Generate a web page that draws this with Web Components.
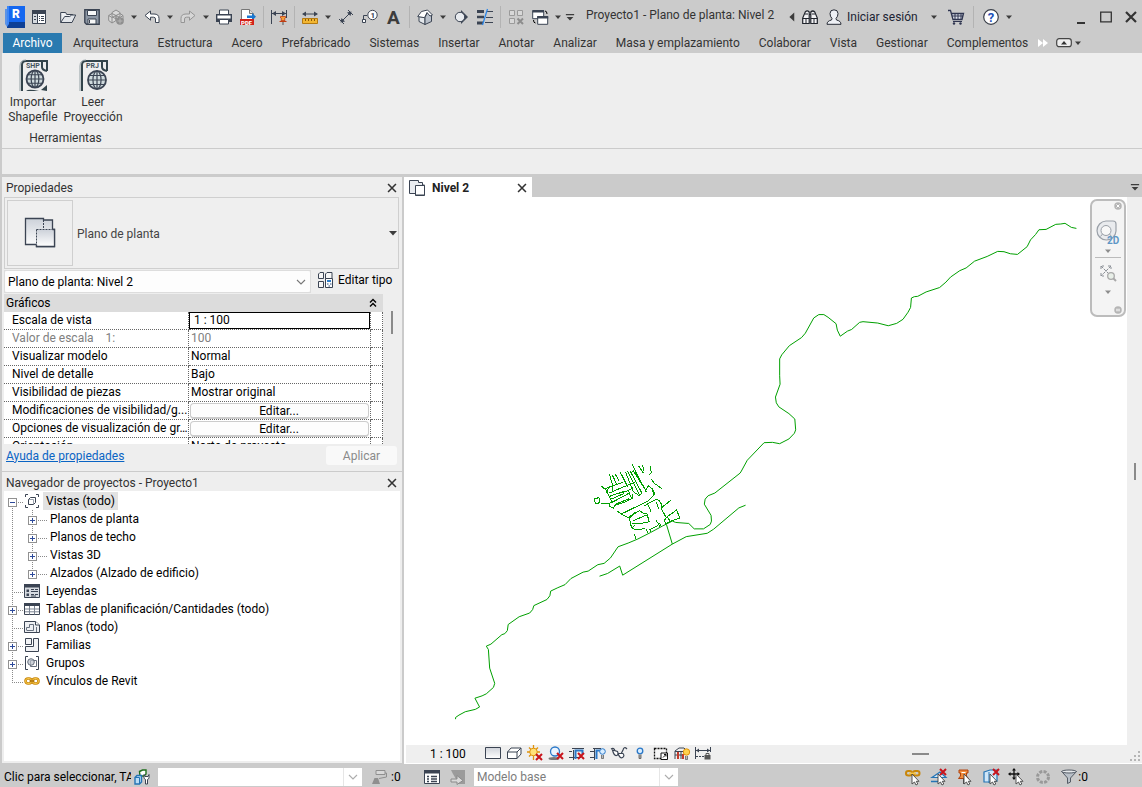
<!DOCTYPE html>
<html lang="es">
<head>
<meta charset="utf-8">
<title>Proyecto1 - Plano de planta: Nivel 2</title>
<style>
  html, body { margin: 0; height: 100%; }
  body {
    --chrome: #cbcbcb;
    --panel: #eeeeee;
    --line: #c8c8c8;
    --ink: #3b4453;
    font: 12px/18px Roboto, "Open Sans", sans-serif;
    color: #000;
    background: var(--chrome);
    overflow: hidden;
  }
</style>
</head>
<body>
<rv-app></rv-app>

<script>
/* ---------- icon set, drawn on a 16 unit grid unless a viewBox is given ---------- */
const K = '#3b4453';
const cursor = '<path d="M7 5v10l2.5-2 1.5 3 1.8-1-1.5-2.7H14z" fill="#fff" stroke="#444" stroke-width=".9"/>';
const redX = (x, y) => `<path d="M${x} ${y}l6 6m0-6l-6 6" stroke="#c8141c" stroke-width="2"/>`;
const globe = (x, y, r) => `<g fill="none" stroke="${K}" stroke-width="1.2"><circle cx="${x}" cy="${y}" r="${r}" fill="#cfdadd" stroke-width="1.8"/><ellipse cx="${x}" cy="${y}" rx="${r * .45}" ry="${r}"/><path d="M${x - r} ${y}h${2 * r}M${x} ${y - r}v${2 * r}M${x - r + 1} ${y - r / 2}h${2 * r - 2}M${x - r + 1} ${y + r / 2}h${2 * r - 2}"/></g>`;
const sheet = (label, foot) => `<path d="M3 32V6q0-4 4-4h14l7 0v10" fill="none" stroke="#33444b" stroke-width="2"/><path d="M23 2v6q0 3 5 4" fill="none" stroke="#33444b" stroke-width="2"/><path d="M1 32V7q0-6 6-6" fill="none" stroke="#93a0a5" stroke-width="1"/><text x="7" y="9" font-size="7" font-weight="700" fill="#44545c" font-family="Roboto,sans-serif">${label}</text>${foot}`;
const ICONS = {
  logo: ['0 0 20 22', `<path d="M0 3h4v18H2l-2-3z" fill="#5c93e6"/><path d="M2 1h18v21H2z" fill="#0d3f96"/><path d="M2 0h18v16H4z" fill="#1467f0"/><path d="M2 0v21l2-3V0z" fill="#3d86f6"/><text x="7" y="12" font-size="12" font-weight="900" fill="#fff" font-family="Roboto,sans-serif">R</text>`],
  props: ['', `<path d="M1.5 1.5h13v13h-13z" fill="#fff" stroke="${K}"/><path d="M1 1h14v4H1z" fill="${K}"/><path d="M2 5h4v9H2z" fill="#d6dae0"/><path d="M6.500 5v9M3 7.500h2M3 10.500h2M8 7.500h1M10 7.500h3M8 9.500h1M10 9.500h3M8 11.500h1M10 11.500h3" stroke="${K}"/>`],
  open: ['', `<path d="M.7 13.500V3.500h5l1 2h6v3" fill="#eef0f3" stroke="${K}"/><path d="M.7 13.500l4-6h5l2-1.500h4L12 13.500z" fill="#e3e6ea" stroke="${K}"/>`],
  save: ['', `<path d="M.8.800h14.400v14.400H2.500L.8 13.500z" fill="#8d97a5" stroke="${K}" stroke-width="1.400"/><path d="M3.500 1.500h9v5h-9z" fill="#f6f7f8" stroke="${K}"/><path d="M4 10h8v5H4z" fill="#f6f7f8" stroke="${K}"/><path d="M5.500 11v3" stroke="${K}"/>`],
  sync: ['', `<g stroke="#8c8c8c" fill="#d9d9d9"><path d="M4 3.500L8 1l4 2.500v4L8 10 4 7.500zM.7 6.500L4 4.500l4 2v5L4 14l-3.300-2.500zM8 6.500l4-2 3 2v5L12 14l-4-2.500z"/><path d="M.7 6.500L4 8.500l4-2 4 2 3-2M4 8.500V14" fill="none"/></g><circle cx="12" cy="12" r="3.800" fill="#8e8e8e"/><path d="M9.500 12h5M12 9.500v5" stroke="#b5b5b5"/>`],
  undo: ['', `<path d="M1 6.500L6.500 2v3H10q5 0 5 4.500v4h-3.500V10q0-1.800-2-1.800h-3v3z" fill="#fff" stroke="${K}" stroke-linejoin="round"/>`],
  redo: ['', `<path d="M15 6.500L9.500 2v3H6Q1 5 1 9.500v4h3.500V10q0-1.800 2-1.800h3v3z" fill="#d6d6d6" stroke="#959595" stroke-linejoin="round"/>`],
  print: ['', `<path d="M3.500 6V1h9v5" fill="#fff" stroke="${K}"/><path d="M.7 5.700h14.600v6.600H.7z" fill="#fff" stroke="${K}" stroke-width="1.400"/><path d="M1 9.500h14v2.800H1z" fill="${K}"/><path d="M3.500 10.500h9v4.500h-9z" fill="#fff" stroke="${K}"/>`],
  pdf: ['', `<path d="M1.500.500h8l4 4V11h-12z" fill="#fff" stroke="#777"/><path d="M9.500.500v4h4" fill="#ddd" stroke="#777"/><path d="M7 6.500h5V4l4 3.700-4 3.800V9H7z" fill="#1b77cf"/><path d="M0 10h14v6H0z" fill="#d22119"/><text x="1" y="15.500" font-size="6" font-weight="900" fill="#fff" font-family="Roboto,sans-serif">PDF</text>`],
  tightdim: ['', `<path d="M.5 1v14M15.500 1v8M1 4.500h14" stroke="${K}"/><path d="M1 4.500L5 2v5zM15 4.500L11 2v5z" fill="${K}"/><path d="M9.500 7.500h5v1.500l-1 .5.5 2h-4l.5-2-1-.5z" fill="#f6a13a" stroke="#c03c12" stroke-width=".8"/><path d="M8.500 12.500h7" stroke="#c03c12"/><path d="M12 13v3" stroke="#555"/>`],
  measure: ['', `<path d="M1.500 5h13" stroke="${K}"/><path d="M0 5l4-2.500v5zM16 5l-4-2.500v5z" fill="${K}"/><path d="M.5 9.500h15v5H.5z" fill="#f2b632" stroke="#b57a10"/><path d="M3.500 10v2M6.500 10v2M9.500 10v2M12.500 10v2" stroke="#8a5a08"/>`],
  aligned: ['', `<path d="M3 13L13 3M1 10l5 5M10 1l5 5" stroke="${K}"/><path d="M2.500 13.500l1-4.500 3.500 3.500zM13.500 2.500L9 3.500 12.500 7z" fill="${K}"/>`],
  tag: ['', `<path d="M1.500 10.500V6.500H5" fill="none" stroke="${K}"/><path d="M.5 10.500h3v3h-3z" fill="#fff" stroke="${K}"/><circle cx="10.500" cy="6" r="4.700" fill="#fff" stroke="${K}"/><text x="8.500" y="9" font-size="8" font-weight="700" fill="${K}" font-family="Roboto,sans-serif">1</text>`],
  text: ['', `<text x="1" y="15" font-size="19" font-weight="700" fill="#3c3c3c" font-family="Roboto,sans-serif">A</text>`],
  house: ['', `<path d="M2 7.500v5L8 15.500V8.500z" fill="#e4e8ec" stroke="${K}"/><path d="M8 15.500l6.500-3V6L11 3 8 8z" fill="#b9c0ca" stroke="${K}"/><path d="M.7 7.500L4.500 2.500 10.500 1 15.500 6l-2.500 1-3-3.500L7.500 8.700z" fill="#fff" stroke="${K}"/>`],
  section: ['', `<path d="M8 1l7 7-7 7z" fill="${K}"/><circle cx="7" cy="8" r="4.700" fill="#e8ebef" stroke="${K}"/>`],
  thin: ['', `<path d="M0 2.500h7M0 14h6" stroke="${K}" stroke-width="3"/><path d="M0 8h7" stroke="${K}" stroke-width="2.500"/><path d="M10 2.500h6M9 8.500h7M8 13.500h8" stroke="${K}"/><path d="M10.500 0L5.500 16" stroke="#2b86e8" stroke-width="1.300"/>`],
  closehidden: ['', `<g fill="#d8d8d8" stroke="#9a9a9a"><path d="M1.500 1.500h5v5h-5zM9.500 1.500h5v5h-5zM1.500 9.500h5v5h-5z"/></g><path d="M9.500 9.500l5.500 5.500m0-5.500l-5.500 5.500" stroke="#8d8d8d" stroke-width="2"/>`],
  switchwin: ['', `<path d="M.7 1.700h11v8h-11z" fill="#fff" stroke="${K}"/><path d="M.5 1h11.500v2.500H.5z" fill="${K}"/><path d="M5.700 7.700h10v7.600h-10z" fill="#fff" stroke="${K}"/><path d="M5.200 7h11v2.500h-11z" fill="${K}"/><path d="M13 2q2 0 2 3M1.500 11q0 3 2 3" fill="none" stroke="#000"/>`],
  custom: ['', `<path d="M2.500 4h11v1.800h-11zM3.500 8h9L8 12.500z" fill="#3c3c3c"/>`],
  caret: ['', `<path d="M4 6h8L8 10.500z" fill="#3c3c3c"/>`],
  left: ['', `<path d="M11 2v12L4.500 8z" fill="#3c3c3c"/>`],
  bino: ['', `<g fill="#f3f3f5" stroke="#20242c" stroke-width="1.200"><path d="M.7 14.500V9l2.500-6q2-2 4 0v11.500zM8.800 14.500V3q2-2 4 0l2.500 6v5.500z"/></g><path d="M.7 9.500h6.500M8.800 9.500h6.500M7 5.500h2M3 5h3M10 5h3M4 10v4M12 10v4" stroke="#20242c"/>`],
  user: ['', `<path d="M1 15.300q0-3.300 4.500-4.300l.5-1.500Q4 7.500 4 4.500 4 .8 8 .8t4 3.700q0 3-2 5l.5 1.500q4.500 1 4.500 4.300z" fill="#eef0f5" stroke="#272b36"/>`],
  cart: ['', `<path d="M0 1.500h2.500L5 10.500h9l1.500-6H3.500" fill="#dfe3ee" stroke="#2f3550" stroke-width="1.300"/><path d="M4 7h11M7 5v5M10 5v5M13 5v5M5 12.500h9" stroke="#2f3550"/><circle cx="6" cy="14.500" r="1.200" fill="#2f3550"/><circle cx="12.500" cy="14.500" r="1.200" fill="#2f3550"/>`],
  help: ['', `<circle cx="8" cy="8" r="7.300" fill="#fff" stroke="#3a3f49" stroke-width="1.200"/><text x="4.800" y="12.500" font-size="13" font-weight="700" fill="#1e50b8" font-family="Roboto,sans-serif">?</text>`],
  min: ['', `<path d="M4 13h8v2H4z" fill="#333"/>`],
  max: ['', `<path d="M2.700 3.200h10.600v9.600H2.700z" fill="none" stroke="#333" stroke-width="1.300"/>`],
  x: ['', `<path d="M3.500 3.500l9 9m0-9l-9 9" stroke="#333" stroke-width="1.800"/>`],
  bigx: ['', `<path d="M3 3l10 10m0-10L3 13" stroke="#333" stroke-width="2.200"/>`],
  more: ['', `<path d="M3 4l5 4-5 4zM8 4l5 4-5 4z" fill="#fff"/>`],
  ribbonmode: ['', `<rect x=".7" y="3.700" width="14.600" height="8" rx="2.500" fill="#eee" stroke="#444" stroke-width="1.200"/><path d="M5 9.500h6L8 6z" fill="#333"/>`],
  shp: ['0 0 28 32', sheet('SHP', globe(16, 20, 8.5) + '<path d="M7 32q2-2 8-1l5 1zM22 31l6-5v6z" fill="#33444b"/>')],
  prj: ['0 0 28 32', sheet('PRJ', globe(18, 21, 9))],
  plan: ['0 0 32 32', `<defs><linearGradient id="g" x2="0" y2="1"><stop stop-color="#ccd1d9"/><stop offset="1" stop-color="#fff"/></linearGradient></defs><path d="M1.500 1.500h18V3h9v9.500h2V29.500h-18v-2h-11z" fill="url(#g)" stroke="${K}" stroke-width="1.300"/><path d="M12.500 12.500h18v17h-18z" fill="url(#g)"/><path d="M12.500 27.500v2h18v-17h-2" fill="none" stroke="${K}" stroke-width="1.300"/><path d="M12.500 12.500v15M12.500 12.500h16M19.500 3v9" stroke="${K}" stroke-dasharray="2 1" fill="none"/>`],
  plansmall: ['', `<path d="M.5.500h9v2h4V5h2v10.500h-9v-2h-6z" fill="#e9ecf0" stroke="${K}"/><path d="M6.500 5.500h9v9.500h-9z" fill="#fff" stroke="${K}"/>`],
  edittype: ['', `<g fill="#f6f6f6" stroke="${K}"><path d="M1.500 2L3 .500h3.500V6.500h-5zM8.500 2L10 .500h5V6.500H8.500zM1.500 9.500h5v6h-5z"/></g><path d="M8.500 6.500h7v9h-7z" fill="#fff" stroke="${K}"/><path d="M10 8h4v2h-4z" fill="#2b7bc8"/><path d="M10 12h1.500M13 12h1.500M11.500 14H13" stroke="#2b4a78"/>`],
  chev: ['', `<path d="M4 6l4 4 4-4" fill="none" stroke="#777" stroke-width="1.100"/>`],
  dblup: ['', `<path d="M5 7.500L8 4.500l3 3M5 11.500l3-3 3 3" fill="none" stroke="#000" stroke-width="1.400"/>`],
  views: ['', `<path d="M4 1.500H1.500V4M12 1.500h2.500V4M4 14.500H1.500V12M12 14.500h2.500V12" fill="none" stroke="${K}"/><path d="M4.500 6.500l2-2h5v5l-2 2h-5z" fill="#fff" stroke="${K}"/><path d="M5 6.500h4.500V11" fill="none" stroke="#9aa2ae"/>`],
  legend: ['', `<path d="M.5 1.500h15v13H.5z" fill="#d7dbe1" stroke="${K}"/><path d="M0 1h16v3.500H0z" fill="${K}"/><path d="M2.500 6.500H5V9H2.500zM2.500 10.500H5V13H2.500z" fill="${K}"/><path d="M7 6.500h3M11 6.500h3M7 8.500h7M7 11.500h3M11 11.500h3M7 13h5" stroke="${K}"/>`],
  sched: ['', `<path d="M.5 2.500h15v11H.5z" fill="#fff" stroke="${K}"/><path d="M0 2h16v3H0z" fill="${K}"/><path d="M1 8h14M1 10.800h14M5.500 5v8.500M10.500 5v8.500" stroke="#7b8492"/>`],
  sheet: ['', `<path d="M.5 2.500h11l4 3.500v7.500H.5z" fill="#eef0f3" stroke="${K}"/><path d="M11.500 2.500v3.500h4" fill="#fff" stroke="${K}"/><path d="M2.500 11V8.500h3v-3h4v6h-7" fill="none" stroke="#67707e"/><path d="M12.500 8v5" stroke="#67707e"/>`],
  family: ['', `<path d="M1.500 1.500h6v6h-6z" fill="#f2f3f5" stroke="${K}"/><path d="M9.500 1.500h5v13h-13v-5h8z" fill="#f2f3f5" stroke="${K}"/>`],
  group: ['', `<path d="M4 1.500H1.500v13H4M12 1.500h2.500v13H12" fill="none" stroke="${K}"/><path d="M6.500 5.500h6v6h-6z" fill="#fff" stroke="#67707e"/><circle cx="7" cy="7" r="3.300" fill="#b9c0ca" fill-opacity=".7" stroke="#67707e"/>`],
  link: ['', `<g fill="none" stroke="#c8860a" stroke-width="2.600"><rect x="1.500" y="5.500" width="6" height="5" rx="2.500"/><rect x="8.500" y="5.500" width="6" height="5" rx="2.500"/></g><g fill="none" stroke="#f7c748"><rect x="1.500" y="5.500" width="6" height="5" rx="2.500"/><rect x="8.500" y="5.500" width="6" height="5" rx="2.500"/></g><path d="M5.500 8h5" stroke="#a86c05" stroke-width="1.500"/>`],
  wheel: ['0 0 26 26', `<path d="M11 2h7q3 0 3 3v7a9.500 9.500 0 1 1-10-10z" fill="#e9ebee" stroke="#9aa0a8" stroke-width="1.200"/><circle cx="11" cy="11.500" r="5" fill="#f8f8f8" stroke="#9aa0a8"/><path d="M7.500 15l-2 2.500M14.500 15l2 2.500" stroke="#9aa0a8"/><text x="12" y="25" font-size="10" font-weight="700" fill="#5f97c6" font-family="Roboto,sans-serif">2D</text>`],
  zoomfit: ['', `<g stroke="#8a8f96" fill="none"><path d="M1 4V1h3M8 1h3v3M1 8v3h3M1 1l10 10M11 1L1 11" stroke-dasharray="3 1"/></g><circle cx="11" cy="11" r="3.300" fill="#e8efe8" stroke="#a9a9a9" stroke-width="1.300"/><path d="M13.500 13.500L16 16" stroke="#a9a9a9" stroke-width="2"/>`],
  ncaret: ['', `<path d="M4 6h8L8 10.500z" fill="#8d8d8d"/>`],
  nclose: ['', `<circle cx="8" cy="8" r="7.500" fill="#b5b5b5"/><path d="M5 5l6 6m0-6l-6 6" stroke="#fff" stroke-width="2"/>`],
  nmin: ['', `<circle cx="8" cy="8" r="7.500" fill="#b5b5b5"/><path d="M4 6.500h8M4 9.500h8" stroke="#fff" stroke-width="1.500"/>`],
  v1: ['', `<defs><linearGradient id="v" x2="0" y2="1"><stop stop-color="#cfd3da"/><stop offset="1" stop-color="#fff"/></linearGradient></defs><path d="M.5 2.500h15v11H.5z" fill="url(#v)" stroke="${K}"/>`],
  v2: ['', `<path d="M1.500 7L5 3h10v6l-4 4.500H1.500z" fill="#fff" stroke="${K}"/><path d="M1.500 7H11v6.500M11 7l4-4" fill="none" stroke="${K}"/>`],
  v3: ['', `<g stroke="#e0930c" stroke-width="1.300"><path d="M6.500 0v15M0 7h13M2 2.500l9 9M11 2.500l-9 9"/></g><circle cx="6.500" cy="7" r="3.800" fill="#ffe27a" stroke="#e0930c"/>${redX(9, 9)}`],
  v4: ['', `<circle cx="7" cy="6.500" r="4.500" fill="#eaf4ff" stroke="#2a78c8" stroke-width="1.300"/><ellipse cx="6" cy="13.500" rx="5.500" ry="1.500" fill="#777"/>${redX(9, 8)}`],
  v5: ['', `<path d="M0 12.500h12M4.500 5v10M0 6.500h3M3 3.500h12" stroke="${K}"/><path d="M6.500 14V5.500h7V9" fill="none" stroke="#2a78c8" stroke-width="2"/>${redX(9, 8)}`],
  v6: ['', `<path d="M0 12.500h4M4.500 3v12M0 6.500h4M3 3.500h8" stroke="${K}"/><path d="M6.500 14V5.500h4" fill="none" stroke="#2a78c8" stroke-width="2"/><circle cx="12.500" cy="6.500" r="2.800" fill="#d8edff" stroke="#2a78c8"/><path d="M11.500 10v3.500h2V10" fill="#bbb" stroke="#555" stroke-width=".7"/>`],
  v7: ['', `<path d="M0 4q3-2 4 2M16 4q-3-3-4 1l-2 4" fill="none" stroke="${K}" stroke-width="1.200"/><path d="M1.500 5l5 1.500q1.500 3.500-1 4t-4-5.500zM7 8.500l5 0q2 2.500-.5 4T7 8.500z" fill="#fff" stroke="${K}" stroke-width="1.200"/>`],
  v8: ['', `<circle cx="8" cy="6" r="2.800" fill="#d8edff" stroke="#2a78c8" stroke-width="1.300"/><path d="M7 9.500v4h2v-4" fill="#aaa" stroke="#555" stroke-width=".8"/>`],
  v9: ['', `<path d="M1.500 3.500h12v10h-12z" fill="#f6f6f6" stroke="#111" stroke-width="1.300" stroke-dasharray="2 1"/><path d="M8 8h6.500v6.500H8z" fill="#fff" stroke="#111"/><path d="M10 12.500l3-3M11 9.500h2v2" stroke="#111" fill="none"/>`],
  v10: ['', `<path d="M1 14V6l4-3h5l3 3v3M4 14V6M7 14V6M1 6.500h10M1 10h9" fill="none" stroke="${K}"/><path d="M3 7h2v7H3zM8 9h2v5H8z" fill="#c23a2c"/><circle cx="12.500" cy="7" r="3.200" fill="#ffd24d" stroke="#e0930c"/><path d="M11.500 11v3.500h2V11" fill="#bbb" stroke="#555" stroke-width=".7"/>`],
  v11: ['', `<path d="M.5 2v12M15.500 2v5M1 5.500h14" stroke="${K}"/><path d="M1 5.500l3-2v4zM15 5.500l-3-2v4z" fill="${K}"/><path d="M1 11.500h8" stroke="${K}" stroke-dasharray="2 1"/><path d="M9.500 10h6v4.500h-6z" fill="#555"/><path d="M11 10V8.500h3V10" fill="none" stroke="#555"/>`],
  workset: ['', `<path d="M5.500 2.500l3-1.500h3.500v4l-2 2h-4z" fill="#fff" stroke="#1f6f1c" stroke-width="1.400"/><path d="M1 8.500l2-2h4.500V13l-2 2H1z" fill="#b9dcf5" stroke="#2474b5" stroke-width="1.400"/><path d="M1 8.500h4.500V15" fill="none" stroke="#2474b5"/><path d="M10 5.500v3q0 1.500 1.500 2V15h2v-4.500Q15 10 15 8.500v-3l-1 2h-3z" fill="#fff" stroke="${K}"/>`],
  brush: ['', `<path d="M5 1.500h9v4H5z" fill="#d8d8d8" stroke="#8f8f8f"/><path d="M14 4h1.500v4L8 9.500" fill="none" stroke="#8f8f8f"/><path d="M1 15l2.500-6H7l2 6z" fill="#8f8f8f"/>`],
  dialog: ['', `<path d="M.5 1.500h15v13H.5z" fill="#fff" stroke="${K}"/><path d="M0 1h16v3.500H0z" fill="${K}"/><path d="M3 7.500h2M7 7.500h6M3 10h2M7 10h6M3 12.500h2M7 12.500h6" stroke="${K}" stroke-width="1.300"/>`],
  exclude: ['', `<path d="M1 1h14v14H9L3 5z" fill="#9b9b9b"/><path d="M1 10h6V6.500l6 5-6 4V13H1z" fill="#d9d9d9" stroke="#8a8a8a"/>`],
  s1: ['', `<g fill="none" stroke="#c8860a" stroke-width="2"><rect x="1" y="2" width="6" height="4.500" rx="2.200"/><rect x="8" y="2" width="6.500" height="4.500" rx="2.200"/></g><path d="M4 4.300h7" stroke="#f7c748" stroke-width="1.500"/>${cursor}`],
  s2: ['', `<path d="M1 8.500h14L9 3z" fill="#d7ebfa" stroke="#2474b5" stroke-width="1.200"/><path d="M0 12.500h12" stroke="#2474b5" stroke-width="1.500"/>${redX(9, 0)}${cursor}`],
  s3: ['', `<path d="M2 1h9v3H9.500v3l2 2.500H1.500L3.500 7V4H2z" fill="#f28c3c" stroke="#b0430e"/><path d="M4.500 3.500h4" stroke="#fff"/><path d="M6.500 10v5" stroke="#555"/>${cursor}`],
  s4: ['', `<path d="M1 3l6-2h7v11l-8 1H1z" fill="#cfe6f8" stroke="#2474b5" stroke-width="1.200"/><path d="M6 3v11" stroke="#2474b5"/>${redX(10, 0)}${cursor}`],
  s5: ['', `<path d="M5 0v10M0 5h10" stroke="#111" stroke-width="1.300"/><path d="M5-1l2 2.500H3zM5 11L3 8.500h4zM-1 5l2.500-2v4zM11 5L8.500 3v4z" fill="#111"/>${cursor}`],
  s6: ['', `<circle cx="8" cy="8" r="5.500" fill="none" stroke="#999" stroke-width="3" stroke-dasharray="3 1.300"/>`],
  s7: ['', `<path d="M.7 2.500L6.500 9v5.500l3-1.500V9l6-6.500z" fill="#b9c0c8" stroke="#555c66"/><ellipse cx="8" cy="2.500" rx="7.300" ry="1.500" fill="#e4e7ea" stroke="#555c66"/>`],
};

const define = (tag, css, html, setup, watched = []) => {
  const tpl = document.createElement('template');
  tpl.innerHTML = `<style>*{box-sizing:border-box}button,input,select{font:inherit;color:inherit;margin:0}button{border:0;background:none;padding:0;display:flex;align-items:center;justify-content:center}${css}</style>${html}`;
  customElements.define(tag, class extends HTMLElement {
    static observedAttributes = watched;
    constructor() {
      super();
      this.attachShadow({ mode: 'open' }).append(tpl.content.cloneNode(true));
    }
    connectedCallback() { if (setup) setup(this, this.shadowRoot); }
    attributeChangedCallback() { setup(this, this.shadowRoot); }
  });
};

define('rv-icon',
  ':host{display:block;flex:none;width:var(--w,16px);height:var(--h,16px)}span{display:block;width:100%;height:100%}svg{display:block;width:100%;height:100%;overflow:visible}',
  '<span></span>',
  (el, root) => {
    const icon = ICONS[el.getAttribute('name')];
    if (icon) root.querySelector('span').innerHTML = `<svg viewBox="${icon[0] || '0 0 16 16'}" aria-hidden="true">${icon[1]}</svg>`;
  }, ['name']);

/* Quick-access button: 24px cell, or 12px for a drop-down arrow */
define('rv-tool',
  ':host{display:block;flex:none}button{width:24px;height:24px}:host([slim]) button{width:12px}:host([slim]) rv-icon{--w:12px;--h:12px}:host([win]) button{width:22px}',
  '<button type="button"><rv-icon></rv-icon></button>',
  (el, root) => {
    root.querySelector('rv-icon').setAttribute('name', el.getAttribute('icon'));
    root.querySelector('button').setAttribute('aria-label', el.getAttribute('label') || 'Desplegar');
  });

const tool = (icon, label, extra = '') => `<rv-tool icon="${icon}" label="${label}" ${extra}></rv-tool>`;
const drop = '<rv-tool icon="caret" slim></rv-tool>';
const sep = '<span class="sep"></span>';

define('rv-titlebar',
  `:host{display:flex;align-items:center;height:33px;color:#333;background:var(--chrome)}
   .logo{--w:20px;--h:22px;margin:0 7px 0 5px}
   .sep{flex:none;width:7px;height:22px;background:linear-gradient(#b3b3b3,#b3b3b3) 3px 0/1px 100% no-repeat}
   .first{margin-right:5px;margin-left:-5px}
   h1{flex:1;min-width:0;margin:0 0 4px 10px;font-size:12px;font-weight:400;white-space:nowrap;overflow:hidden;text-overflow:ellipsis}
   .login{min-width:82px;justify-content:flex-start;padding-left:1px;color:#1c2333}
   .shop{display:flex;align-items:center;gap:2px;margin-left:4px}
   .win{display:flex;gap:3px;margin-left:55px}`,
  `<rv-icon class="logo" name="logo"></rv-icon><span class="first">${tool('props', 'Propiedades')}</span>
   ${tool('open', 'Abrir')}${tool('save', 'Guardar')}${tool('sync', 'Sincronizar')}${drop}${tool('undo', 'Deshacer')}${drop}${tool('redo', 'Rehacer')}${drop}${tool('print', 'Imprimir')}${tool('pdf', 'Exportar PDF')}${sep}
   ${tool('tightdim', 'Restricciones')}${sep}${tool('measure', 'Medir')}${drop}${tool('aligned', 'Cota alineada')}${tool('tag', 'Etiqueta')}${tool('text', 'Texto')}${sep}
   ${tool('house', 'Vista 3D')}${drop}${tool('section', 'Sección')}${tool('thin', 'Líneas finas')}${sep}${tool('closehidden', 'Cerrar inactivas')}${tool('switchwin', 'Cambiar ventana')}${drop}${tool('custom', 'Personalizar', 'slim')}
   <h1>Proyecto1 - Plano de planta: Nivel 2</h1>
   ${tool('left', 'Contraer', 'slim')}${tool('bino', 'Buscar')}${tool('user', 'Cuenta')}<button class="login" type="button">Iniciar sesión</button>${drop}<span class="shop">${tool('cart', 'Tienda')}${sep}${tool('help', 'Ayuda')}</span>${drop}
   <span class="win">${tool('min', 'Minimizar', 'win')}${tool('max', 'Maximizar', 'win')}${tool('bigx', 'Cerrar', 'win')}</span>`);

define('rv-tabs',
  `:host{display:flex;align-items:center;height:20px;padding-left:3px;color:#333}
   nav{display:flex;gap:19px;align-items:center;height:20px}
   a{color:inherit;text-decoration:none;line-height:20px;white-space:nowrap}
   a.on{background:#2a7ab0;color:#fff;width:59px;margin-right:-8px;text-align:center}
   .end{display:flex;align-items:center;margin-left:7px}.end button+button{margin-left:5px}`,
  `<nav><a class="on" href="#archivo">Archivo</a>${['Arquitectura', 'Estructura', 'Acero', 'Prefabricado', 'Sistemas', 'Insertar', 'Anotar', 'Analizar', 'Masa y emplazamiento', 'Colaborar', 'Vista', 'Gestionar', 'Complementos'].map(t => `<a href="#">${t}</a>`).join('')}</nav>
   <span class="end"><button type="button" aria-label="Más fichas"><rv-icon name="more"></rv-icon></button><button type="button" aria-label="Minimizar cinta"><rv-icon name="ribbonmode"></rv-icon></button>${drop}</span>`);

define('rv-big-button',
  ':host{display:block;width:60px}button{width:100%;flex-direction:column;justify-content:flex-start;line-height:15px;color:#333;text-align:center}rv-icon{--w:28px;--h:32px;margin:6px 0 4px}',
  '<button type="button"><rv-icon></rv-icon><slot></slot></button>',
  (el, root) => root.querySelector('rv-icon').setAttribute('name', el.getAttribute('icon')));

define('rv-ribbon',
  `:host{display:block;height:95px;margin-left:2px;background:var(--panel);color:#333}
   section{display:inline-flex;flex-direction:column;padding-left:1px}
   div{display:flex}h2{margin:4px 0 0;padding-left:5px;font-size:12px;line-height:18px;font-weight:400;text-align:center}`,
  `<section><div><rv-big-button icon="shp">Importar<br>Shapefile</rv-big-button><rv-big-button icon="prj">Leer<br>Proyección</rv-big-button></div><h2>Herramientas</h2></section>`);

define('rv-panel',
  `:host{display:flex;flex-direction:column;min-height:0;background:var(--panel)}
   header{flex:none;display:flex;align-items:center;justify-content:space-between;height:20px;padding:1px 3px 0 4px;color:#333}
   h2{margin:0;font-size:12px;font-weight:400;line-height:18px}rv-icon{--w:14px;--h:14px}`,
  '<header><h2></h2><button type="button" aria-label="Cerrar panel"><rv-icon name="x"></rv-icon></button></header><slot></slot>',
  (el, root) => { root.querySelector('h2').textContent = el.getAttribute('heading'); });

define('rv-type-selector',
  `:host{display:flex;align-items:center;height:72px;margin:0 3px 0 2px;padding:0 0 0 2px;border:1px solid #cfcfcf;color:#444;background:#efefef}
   .thumb{display:flex;align-items:center;justify-content:center;width:66px;height:66px;border:1px solid #cfcfcf;--w:32px;--h:32px}
   .name{flex:1;padding:1px 0 0 4px}.go{margin-right:-3px}`,
  '<span class="thumb"><rv-icon name="plan"></rv-icon></span><span class="name">Plano de planta</span><button class="go" type="button" aria-label="Cambiar tipo"><rv-icon name="caret"></rv-icon></button>');

/* Drop-down list with a chevron; "muted" greys its text */
define('rv-select',
  `:host{display:grid;align-items:center;height:21px}
   select{grid-area:1/1;width:100%;height:100%;appearance:none;border:0;border-radius:2px;background:#fdfdfd;padding:0 20px 0 3px;outline:0}
   rv-icon{grid-area:1/1;justify-self:end;margin-right:1px;pointer-events:none}
   :host([muted]){height:18px}:host([muted]) rv-icon{opacity:.6}:host([muted]) select{color:#7d7d7d;border-radius:0;background:linear-gradient(#e6e6e6,#e6e6e6) calc(100% - 18px) 0/1px 100% no-repeat #fff}`,
  '<select><option></option></select><rv-icon name="chev"></rv-icon>',
  (el, root) => {
    root.querySelector('option').textContent = el.getAttribute('value') || '';
    root.querySelector('select').setAttribute('aria-label', el.getAttribute('label'));
  });

define('rv-property-grid',
  `:host{display:flex;flex:1;min-height:0;margin:2px 2px 0;overflow:hidden}
   .grid{flex:1;min-width:0;overflow:hidden;background:#fff}
   h3{display:flex;align-items:center;justify-content:space-between;height:18px;margin:0;padding:0 2px;font-size:12px;font-weight:400;background:#dcdcdc}
   table{width:100%;table-layout:fixed;border-collapse:separate;border-spacing:0}
   col.name{width:185px}col.end{width:12px}
   th,td{height:18px;padding:0 2px;line-height:17px;text-align:left;font-weight:400;white-space:nowrap;overflow:hidden;text-overflow:ellipsis;border:0 dotted #666;border-width:0 1px 1px 0}
   th{padding:0 0 0 8px}.off{color:#808080}td:has(button),td:has(input){padding:0}
   input{display:block;width:100%;height:17px;border:1px solid #000;padding:0 4px;outline:0;border-radius:0;background:#fff}
   td button{width:179px;height:16px;margin:0 1px;padding:1px 1px 0 0;border:1px solid #ccc;border-bottom-width:2px;border-radius:4px;background:#fdfdfd;line-height:12px}
   .bar{flex:none;width:17px;padding:17px 0 0 8px}.bar i{display:block;width:2px;height:23px;background:#8a8a8a}`,
  `<div class="grid"><h3>Gráficos<rv-icon name="dblup"></rv-icon></h3>
   <table><colgroup><col class="name"><col><col class="end"></colgroup><tbody>
   <tr><th scope="row"><label for="sc">Escala de vista</label></th><td><input id="sc" value="1 : 100"></td><td></td></tr>
   <tr class="off"><th scope="row">Valor de escala &nbsp;&nbsp; 1:</th><td>100</td><td></td></tr>
   <tr><th scope="row">Visualizar modelo</th><td>Normal</td><td></td></tr>
   <tr><th scope="row">Nivel de detalle</th><td>Bajo</td><td></td></tr>
   <tr><th scope="row">Visibilidad de piezas</th><td>Mostrar original</td><td></td></tr>
   <tr><th scope="row">Modificaciones de visibilidad/g...</th><td><button type="button">Editar...</button></td><td></td></tr>
   <tr><th scope="row">Opciones de visualización de gr...</th><td><button type="button">Editar...</button></td><td></td></tr>
   <tr><th scope="row">Orientación</th><td>Norte de proyecto</td><td></td></tr>
   </tbody></table></div><div class="bar"><i></i></div>`);

define('rv-properties',
  `:host{display:block;min-height:0}rv-panel{height:100%}
   .pick{display:flex;flex:none;align-items:center;height:21px;margin:2px 3px 0}
   rv-select{width:305px;border:0;box-shadow:0 0 0 1px #ddd}
   .edit{margin-left:7px;gap:5px;height:21px;padding-bottom:3px}
   footer{display:flex;flex:none;align-items:center;justify-content:space-between;height:27px;padding:0 5px 4px 4px}
   a{color:#0a64c4}footer button{width:71px;height:19px;border-radius:3px;background:#f9f9f9;color:#8a8a8a}`,
  `<rv-panel heading="Propiedades"><rv-type-selector></rv-type-selector>
   <div class="pick"><rv-select label="Vista" value="Plano de planta: Nivel 2"></rv-select><button class="edit" type="button"><rv-icon name="edittype"></rv-icon>Editar tipo</button></div>
   <rv-property-grid></rv-property-grid>
   <footer><a href="#ayuda">Ayuda de propiedades</a><button type="button" disabled>Aplicar</button></footer></rv-panel>`);

/* Tree row: level 0 carries an icon, level 1 is indented under a dotted rail */
define('rv-node',
  `:host{--v:repeating-linear-gradient(#8a8a8a 0 1px,transparent 1px 2px);display:flex;align-items:center;height:18px}
   .rail,.hook{flex:none;width:20px;height:18px;background:var(--v) 8px 0/1px 100% no-repeat}
   .hook{display:flex;align-items:center;padding:2px 0 0 4px;background:var(--v) 8px var(--top,0)/1px var(--len,100%) no-repeat,repeating-linear-gradient(90deg,#8a8a8a 0 1px,transparent 1px 2px) 8px 10px/100% 1px no-repeat}
   :host([first]){--top:10px}:host([last]){--len:10px}
   .rail{display:none}:host([sub]) .rail{display:block}:host([sub]) .hook{width:23px}:host([sub]) rv-icon{display:none}:host([sub]) .txt{margin-left:0}
   .hook button{width:9px;height:9px;border:1px solid #919191;background:linear-gradient(#2d4a9a,#2d4a9a) center/5px 1px no-repeat,linear-gradient(#2d4a9a,#2d4a9a) center/1px 5px no-repeat,#fff}
   :host([open]) .hook button{background:linear-gradient(#2d4a9a,#2d4a9a) center/5px 1px no-repeat,#fff}
   :host([leaf]) .hook button{display:none}
   .txt{margin-left:3px;padding:0 3px;white-space:nowrap}:host([open]) .txt{background:#e2e2e2}`,
  '<span class="rail"></span><span class="hook"><button type="button" aria-label="Expandir"></button></span><rv-icon></rv-icon><span class="txt"><slot></slot></span>',
  (el, root) => root.querySelector('rv-icon').setAttribute('name', el.getAttribute('icon') || 'views'));

define('rv-browser',
  `:host{display:block;min-height:0}rv-panel{height:100%}.tree{flex:1;margin:-1px 2px 2px;padding-top:1px;background:#fff;overflow:hidden}`,
  `<rv-panel heading="Navegador de proyectos - Proyecto1"><div class="tree">
   <rv-node icon="views" open first>Vistas (todo)</rv-node>
   <rv-node sub>Planos de planta</rv-node><rv-node sub>Planos de techo</rv-node><rv-node sub>Vistas 3D</rv-node><rv-node sub last>Alzados (Alzado de edificio)</rv-node>
   <rv-node icon="legend" leaf>Leyendas</rv-node><rv-node icon="sched">Tablas de planificación/Cantidades (todo)</rv-node><rv-node icon="sheet" leaf>Planos (todo)</rv-node>
   <rv-node icon="family">Familias</rv-node><rv-node icon="group">Grupos</rv-node><rv-node icon="link" leaf last>Vínculos de Revit</rv-node>
   </div></rv-panel>`);

define('rv-doc-tabs',
  `:host{display:flex;align-items:center;justify-content:space-between;height:20px}
   .tab{display:flex;align-items:center;width:128px;height:20px;padding:1px 3px 0 5px;background:#fff;font-weight:700;color:#222}
   .tab a{flex:1;margin-left:7px;color:inherit;text-decoration:none}.x{--w:14px;--h:14px}rv-tool{margin-right:1px}`,
  `<div class="tab"><rv-icon name="plansmall"></rv-icon><a href="#nivel2">Nivel 2</a><button class="x" type="button" aria-label="Cerrar vista"><rv-icon name="x"></rv-icon></button></div>${tool('custom', 'Lista de vistas', 'slim')}`);

define('rv-navbar',
  `:host{display:flex;flex-direction:column;align-items:center;width:36px;height:118px;padding:1px;border:2px solid #bcbcbc;border-radius:7px;background:#f4f4f4;box-sizing:border-box}
   .s{align-self:flex-end;--w:8px;--h:8px;margin-right:1px}.w{--w:26px;--h:26px;margin-top:9px}.z{margin-top:7px}
   .c{--w:12px;--h:12px}hr{width:26px;margin:0;border:0;border-top:1px solid #bbb}.z+.c{margin-top:5px}.m{margin-top:auto}`,
  `<button class="s" aria-label="Cerrar"><rv-icon name="nclose"></rv-icon></button><button class="w" aria-label="Rueda 2D"><rv-icon name="wheel"></rv-icon></button><button class="c" aria-label="Opciones de rueda"><rv-icon name="ncaret"></rv-icon></button><hr>
   <button class="z" aria-label="Zoom"><rv-icon name="zoomfit"></rv-icon></button><button class="c" aria-label="Opciones de zoom"><rv-icon name="ncaret"></rv-icon></button><button class="s m" aria-label="Opciones"><rv-icon name="nmin"></rv-icon></button>`);

define('rv-canvas',
  `:host{display:flex;position:relative;min-height:0}
   .view{flex:1;min-width:0;background:#fff}svg{display:block;width:100%;height:100%}
   path{fill:none;stroke:#00a000;stroke-width:1;vector-effect:non-scaling-stroke;shape-rendering:crispEdges}
   .bar{flex:none;display:flex;align-items:center;justify-content:center;width:15px;background:#efefef}.bar i{width:2px;height:17px;background:#8a8a8a}
   rv-navbar{position:absolute;top:2px;right:16px}`,
  `<div class="view"><svg viewBox="404 197 723 548" role="img" aria-label="Trazado importado">
   <g transform="translate(440 200) scale(.4209 .338)">
   <path d="M37 1536V1531L45 1524 60 1514 84 1507 94 1500 83 1474 100 1467 110 1461 127 1442 130 1430 118 1385 115 1330 110 1320 121 1314 147 1286 154 1283 160 1274 162 1256 188 1233 213 1222 220 1212 223 1200 254 1182 261 1171 263 1157 280 1147 297 1138 311 1120 340 1101 352 1098 375 1079 390 1075 405 1059 423 1026 447 1015 470 1003 500 984 528 965 552 950 560 954 591 957 604 973 626 973 642 960 645 950 644 933 628 900 630 885 637 875 653 867 713 808 716 802 730 770 770 718 790 717 807 721 829 707 842 690 845 680 843 648 829 632 805 612 799 600 797 583 808 545 807 520V470L812 458 830 431 859 407 868 394 888 349 900 339H912L922 347 941 366 944 385 951 403 968 388 978 383 997 362 1005 360 1040 364 1065 372 1085 365 1100 353 1112 332 1118 318 1120 290 1127 286 1135 285 1155 272 1187 259 1202 243 1213 228 1235 209 1250 201 1270 181 1300 167 1325 152 1340 153 1355 159 1372 161 1395 138 1403 118 1415 102 1423 88 1440 87 1463 72 1475 71 1485 69 1500 81 1512 84"/>
   <path d="M379 1113L398 1105 427 1083 434 1110 552 1018 585 996 635 986 650 974 710 911 726 903M538 960L552 1018"/></g>
   <g transform="translate(580 450) scale(.33333)">
   <path d="M43 147L56 143 60 150 56 160 46 160ZM64 160H88M88 72L97 103 98 123M97 75L110 103M106 73L117 92M121 67L143 110M136 65L160 125M142 62L180 138M150 62L186 130M157 43L170 72 200 127M152 68L160 63 198 122M175 47L190 68M188 45L191 60 186 68M211 48L214 68 208 73M214 86L222 100 232 106 245 116M64 108L80 122 97 160M76 116L110 103 128 97M86 130L120 115 165 97M86 140L128 125M92 148L133 130M98 135L145 122 160 112M88 160L104 153 150 128M88 160L90 170 100 174 108 162 148 146M108 165L130 158 156 145 158 133M78 128L90 108M145 122L153 142 159 147M160 125L176 136 186 130"/>
   <path d="M110 182L124 192 148 205 155 235M124 192L165 172 205 153M192 168L228 148 238 152 246 165 246 180 260 205M205 153L222 135 215 115 205 108 195 125M216 115L226 136M246 172L272 151M205 165L213 185M228 155L237 178M148 200L178 182 190 190 200 190 208 215 175 222 155 222M148 205L165 188M160 212L200 195M155 235L165 225M155 235L170 240 195 235M163 252L168 266M203 250L200 238M213 247L210 239 220 234 235 226M228 210L240 230M244 230L238 218M254 210L262 200 290 180 299 204 275 212 256 222ZM262 200L270 214"/></g>
   </svg></div><div class="bar"><i></i></div><rv-navbar></rv-navbar>`);

define('rv-viewbar',
  `:host{display:flex;align-items:center;height:18px;margin-left:2px;background:#efefef}
   .scale{width:79px;padding-left:24px;justify-content:flex-start;height:18px}.set{display:flex;gap:5px;padding-bottom:2px}
   .track{flex:1;display:flex;justify-content:center}.track i{width:17px;height:2px;background:#8a8a8a}
   .grip{width:10px;height:10px;margin:4px 2px 0 0;background:linear-gradient(#b5b5b5,#b5b5b5) 0 8px/2px 2px no-repeat,linear-gradient(#b5b5b5,#b5b5b5) 4px 8px/2px 2px no-repeat,linear-gradient(#b5b5b5,#b5b5b5) 8px 8px/2px 2px no-repeat,linear-gradient(#b5b5b5,#b5b5b5) 4px 4px/2px 2px no-repeat,linear-gradient(#b5b5b5,#b5b5b5) 8px 4px/2px 2px no-repeat,linear-gradient(#b5b5b5,#b5b5b5) 8px 0/2px 2px no-repeat}`,
  `<button class="scale" type="button">1 : 100</button><span class="set">${Array.from({ length: 11 }, (_, i) => `<button type="button" aria-label="Control de vista ${i + 1}"><rv-icon name="v${i + 1}"></rv-icon></button>`).join('')}</span><span class="track"><i></i></span><span class="grip"></span>`);

define('rv-status',
  `:host{display:flex;align-items:center;height:23px;padding:2px 54px 0 4px;background:var(--chrome);box-sizing:border-box}
   .hint{flex:none;width:127px;overflow:hidden;white-space:nowrap}.a{margin:0 8px 0 3px}
   rv-select{width:204px}.b{margin-left:9px}.n{margin-left:4px;width:33px}.c{margin-right:10px}.e{margin:0 8px 0 0}
   .tools{display:flex;align-items:center;gap:10px;margin-left:auto}.tools span{margin-left:-9px}`,
  `<span class="hint">Clic para seleccionar, TA</span><button class="a" aria-label="Subproyectos"><rv-icon name="workset"></rv-icon></button><rv-select muted label="Subproyecto activo"></rv-select>
   <button class="b" aria-label="Solicitudes"><rv-icon name="brush"></rv-icon></button><span class="n">:0</span><button class="c" aria-label="Opciones de diseño"><rv-icon name="dialog"></rv-icon></button><button class="e" aria-label="Excluir opciones"><rv-icon name="exclude"></rv-icon></button><rv-select muted label="Opción de diseño" value="Modelo base"></rv-select>
   <div class="tools">${Array.from({ length: 7 }, (_, i) => `<button type="button" aria-label="Selección ${i + 1}"><rv-icon name="s${i + 1}"></rv-icon></button>`).join('')}<span>:0</span></div>`);

define('rv-app',
  `:host{display:grid;grid-template-rows:33px 20px 95px 26px 1fr 23px;height:100vh;min-width:0;overflow:hidden}
   .options{margin:1px 0 0 2px;background:var(--panel)}
   main{display:grid;grid-template-columns:400px 1fr;gap:2px;min-height:0;margin:2px 0 0;padding:1px 0 0 2px}
   .side{display:grid;grid-template-rows:294px 1fr;gap:1px;min-height:0;margin-bottom:1px}
   .doc{display:grid;grid-template-rows:20px 1fr 18px;min-width:0;min-height:0;background:linear-gradient(#fff,#fff) 0 100%/100% 30px no-repeat;padding-bottom:1px}`,
  `<rv-titlebar></rv-titlebar><rv-tabs></rv-tabs><rv-ribbon></rv-ribbon><div class="options"></div>
   <main><div class="side"><rv-properties></rv-properties><rv-browser></rv-browser></div>
   <div class="doc"><rv-doc-tabs></rv-doc-tabs><rv-canvas></rv-canvas><rv-viewbar></rv-viewbar></div></main><rv-status></rv-status>`);
</script>
</body>
</html>
